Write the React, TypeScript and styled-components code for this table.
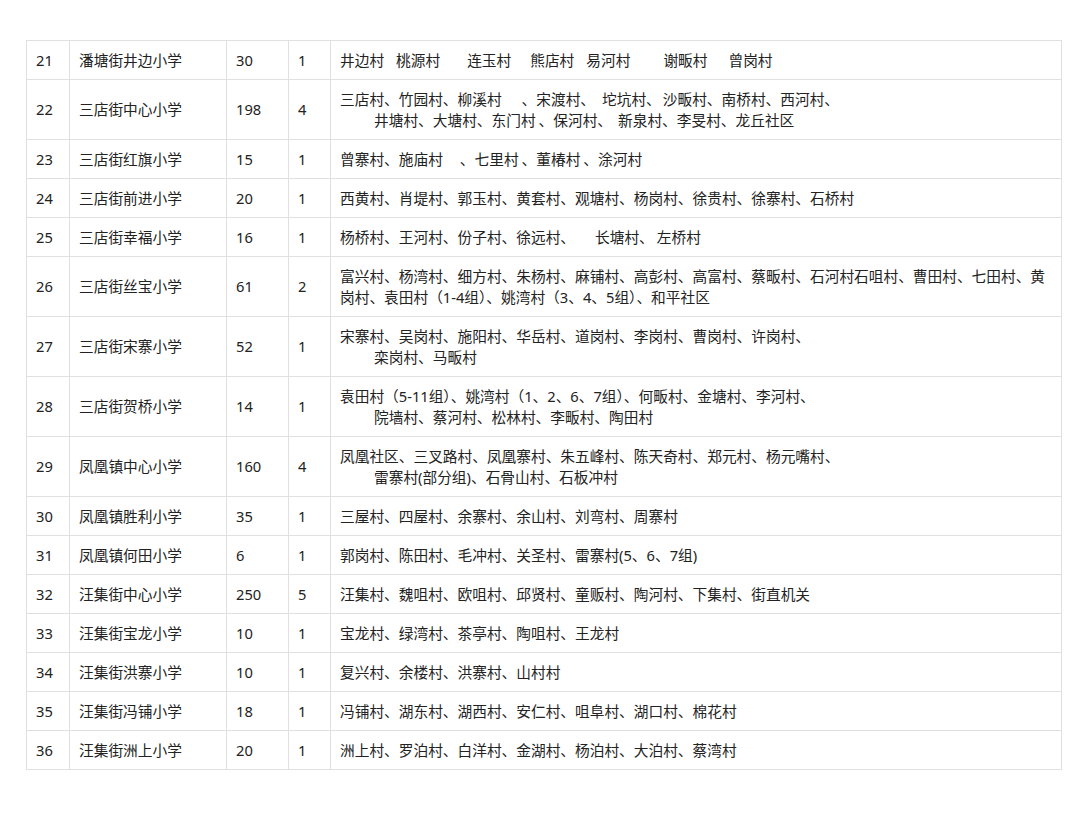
import React from 'react'
import styled, { createGlobalStyle } from 'styled-components'

const GlobalStyle = createGlobalStyle`
  html, body {
    margin: 0;
    padding: 0;
    background: #ffffff;
  }
  body {
    font-family: "Noto Sans", "Noto Sans CJK SC", sans-serif;
    color: #222;
  }
`

const Page = styled.div`
  padding: 40px 0 0 26px;
`

const Table = styled.table`
  width: 1036px;
  border-collapse: collapse;
  table-layout: fixed;
  font-size: 14.7px;
  line-height: 21px;
`

const Cell = styled.td<{ w?: number }>`
  box-sizing: border-box;
  width: ${({ w }) => (w ? `${w}px` : 'auto')};
  border: 1px solid #e0e0e0;
  padding: 8.5px 9px;
  vertical-align: middle;
  white-space: nowrap;
  color: #222;
`

const TextCell = styled(Cell)`
  white-space: normal;
  word-break: break-all;
`

const Line = styled.div<{ indent?: boolean }>`
  padding-left: ${({ indent }) => (indent ? '34px' : '0')};
  white-space: nowrap;
`

const Gap = styled.span<{ w: number }>`
  display: inline-block;
  width: ${({ w }) => w}px;
`

type Part = string | number
interface RowData {
  id: number
  name: string
  students: number
  classes: number
  lines?: Part[][]
  wrap?: string
}

const rows: RowData[] = [
  { id: 21, name: '潘塘街井边小学', students: 30, classes: 1,
    lines: [['井边村', 12, '桃源村', 27, '连玉村', 19, '熊店村', 12, '易河村', 33, '谢畈村', 21, '曾岗村']] },
  { id: 22, name: '三店街中心小学', students: 198, classes: 4,
    lines: [
      ['三店村、竹园村、柳溪村', 20, '、宋渡村、', 7, '坨坑村、', 2, '沙畈村、南桥村、西河村、'],
      ['井塘村、大塘村、东门村', 3, '、保河村、', 6, '新泉村、李旻村、龙丘社区'],
    ] },
  { id: 23, name: '三店街红旗小学', students: 15, classes: 1,
    lines: [['曾寨村、施庙村', 17, '、七里村', 3, '、董椿村', 3, '、涂河村']] },
  { id: 24, name: '三店街前进小学', students: 20, classes: 1,
    lines: [['西黄村、肖堤村、郭玉村、黄套村、观塘村、杨岗村、徐贵村、徐寨村、石桥村']] },
  { id: 25, name: '三店街幸福小学', students: 16, classes: 1,
    lines: [['杨桥村、王河村、份子村、徐远村、', 20, '长塘村、', 3, '左桥村']] },
  { id: 26, name: '三店街丝宝小学', students: 61, classes: 2,
    wrap: '富兴村、杨湾村、细方村、朱杨村、麻铺村、高彭村、高富村、蔡畈村、石河村石咀村、曹田村、七田村、黄岗村、袁田村（1-4组）、姚湾村（3、4、5组）、和平社区' },
  { id: 27, name: '三店街宋寨小学', students: 52, classes: 1,
    lines: [
      ['宋寨村、吴岗村、施阳村、华岳村、道岗村、李岗村、曹岗村、许岗村、'],
      ['栾岗村、马畈村'],
    ] },
  { id: 28, name: '三店街贺桥小学', students: 14, classes: 1,
    lines: [
      ['袁田村（5-11组）、姚湾村（1、2、6、7组）、何畈村、金塘村、李河村、'],
      ['院墙村、蔡河村、松林村、李畈村、陶田村'],
    ] },
  { id: 29, name: '凤凰镇中心小学', students: 160, classes: 4,
    lines: [
      ['凤凰社区、三叉路村、凤凰寨村、朱五峰村、陈天奇村、郑元村、杨元嘴村、'],
      ['雷寨村(部分组)、石骨山村、石板冲村'],
    ] },
  { id: 30, name: '凤凰镇胜利小学', students: 35, classes: 1,
    lines: [['三屋村、四屋村、余寨村、余山村、刘弯村、周寨村']] },
  { id: 31, name: '凤凰镇何田小学', students: 6, classes: 1,
    lines: [['郭岗村、陈田村、毛冲村、关圣村、雷寨村(5、6、7组)']] },
  { id: 32, name: '汪集街中心小学', students: 250, classes: 5,
    lines: [['汪集村、魏咀村、欧咀村、邱贤村、童贩村、陶河村、下集村、街直机关']] },
  { id: 33, name: '汪集街宝龙小学', students: 10, classes: 1,
    lines: [['宝龙村、绿湾村、茶亭村、陶咀村、王龙村']] },
  { id: 34, name: '汪集街洪寨小学', students: 10, classes: 1,
    lines: [['复兴村、余楼村、洪寨村、山村村']] },
  { id: 35, name: '汪集街冯铺小学', students: 18, classes: 1,
    lines: [['冯铺村、湖东村、湖西村、安仁村、咀阜村、湖口村、棉花村']] },
  { id: 36, name: '汪集街洲上小学', students: 20, classes: 1,
    lines: [['洲上村、罗泊村、白洋村、金湖村、杨泊村、大泊村、蔡湾村']] },
]

const renderParts = (parts: Part[]) =>
  parts.map((p, i) => (typeof p === 'number' ? <Gap key={i} w={p} /> : <span key={i}>{p}</span>))

export default function App() {
  return (
    <Page>
      <GlobalStyle />
      <Table>
        <colgroup>
          <col style={{ width: 43 }} />
          <col style={{ width: 157 }} />
          <col style={{ width: 62 }} />
          <col style={{ width: 42 }} />
          <col />
        </colgroup>
        <tbody>
          {rows.map((r) => (
            <tr key={r.id}>
              <Cell w={43}>{r.id}</Cell>
              <Cell w={157}>{r.name}</Cell>
              <Cell w={62}>{r.students}</Cell>
              <Cell w={42}>{r.classes}</Cell>
              <TextCell>
                {r.wrap
                  ? r.wrap
                  : r.lines!.map((l, i) => (
                      <Line key={i} indent={i > 0}>
                        {renderParts(l)}
                      </Line>
                    ))}
              </TextCell>
            </tr>
          ))}
        </tbody>
      </Table>
    </Page>
  )
}
